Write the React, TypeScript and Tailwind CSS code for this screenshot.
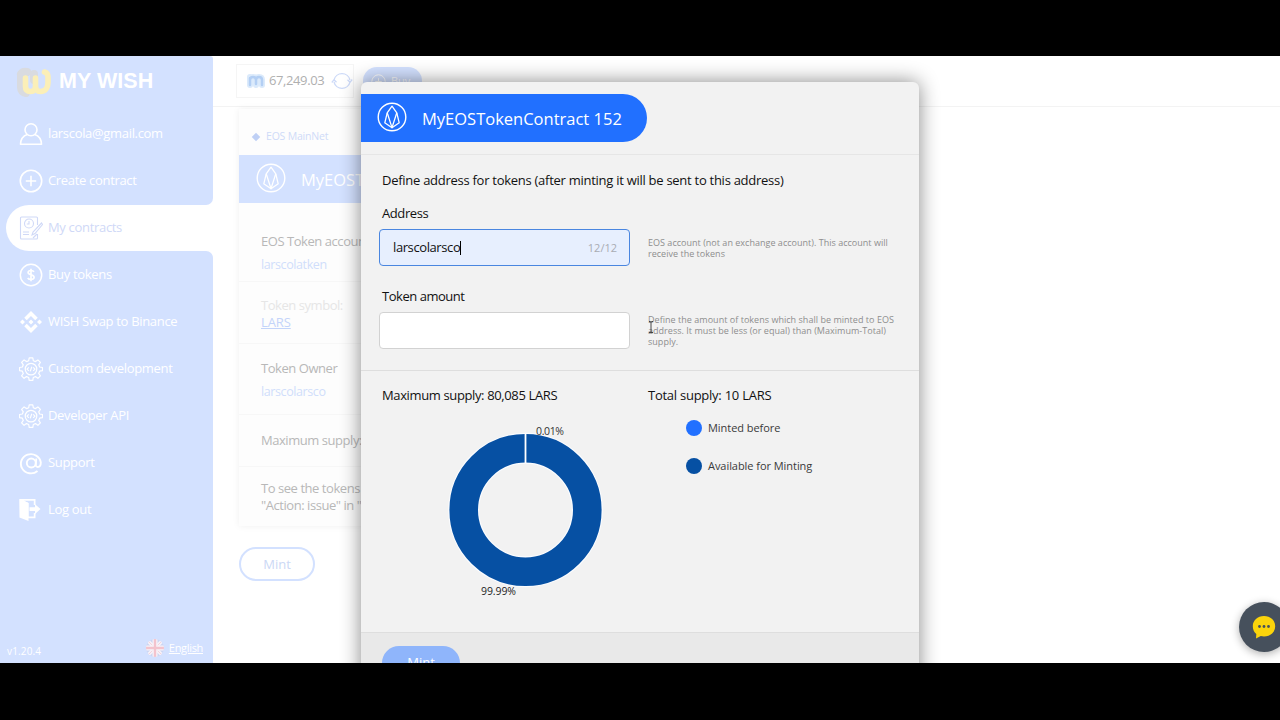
import type { ReactNode } from 'react';
import { SiBinance } from 'react-icons/si';

function EosIcon({ className }: { className?: string }) {
  return (
    <svg viewBox="0 0 30 30" className={className} fill="none" stroke="currentColor" strokeLinejoin="round">
      <circle cx="15" cy="15" r="13.8" strokeWidth="1.4" />
      <path d="M15 4.2 10.2 10.8 7.8 20.800 15 25.800 22.200 20.800 19.800 10.8Z" strokeWidth="1.3" />
      <path d="M10.2 10.8 15 25.600 19.800 10.8" strokeWidth="1.3" />
    </svg>
  );
}

function UserIcon() {
  return (
    <svg viewBox="0 0 24 24" className="w-6 h-6" fill="none" stroke="currentColor" strokeWidth="1.600">
      <circle cx="12" cy="7.8" r="6" />
      <path d="M8.3 12.500C4 14 1.600 17.500 1.500 22.300h21c-.1-4.800-2.500-8.300-6.800-9.800" strokeLinejoin="round" />
    </svg>
  );
}

function PlusIcon({ className = 'w-6 h-6' }: { className?: string }) {
  return (
    <svg viewBox="0 0 24 24" className={className} fill="none" stroke="currentColor" strokeWidth="1.600">
      <circle cx="12" cy="12" r="10.7" />
      <path d="M12 6.800v10.400M6.800 12h10.400" />
    </svg>
  );
}

function ContractIcon() {
  return (
    <svg viewBox="0 0 24 24" className="w-6 h-6" fill="none" stroke="currentColor" strokeWidth="1.100">
      <path d="M18.500 9V2a1 1 0 0 0-1-1h-15a1 1 0 0 0-1 1v20a1 1 0 0 0 1 1h15a1 1 0 0 0 1-1v-4" />
      <circle cx="10" cy="7.500" r="4.500" />
      <path d="M10 5v3H7.800M4 16h6M4 18.500h6" />
      <path d="m22.500 7-8.500 9-1 3 3-1.500L23.500 8.500ZM14 22l4-4" />
    </svg>
  );
}

function DollarIcon() {
  return (
    <svg viewBox="0 0 24 24" className="w-6 h-6" fill="none" stroke="currentColor">
      <circle cx="12" cy="12" r="10.7" strokeWidth="1.500" />
      <path d="M15 8.800c-.6-.9-1.700-1.300-3-1.300-1.700 0-2.900.8-2.900 2.100 0 3 6 1.500 6 4.700 0 1.400-1.300 2.200-3.100 2.200-1.400 0-2.600-.5-3.300-1.500M12 5.800v12.400" strokeWidth="1.700" />
    </svg>
  );
}

function GearIcon() {
  return (
    <svg viewBox="0 0 24 24" className="w-6 h-6" fill="none" stroke="currentColor" strokeWidth="1.200" strokeLinejoin="round">
      <path d="M10.200 .8h3.600l.5 2.900 2.200.9 2.400-1.700 2.500 2.500-1.700 2.400.9 2.200 2.900.5v3.200l-2.900.5-.9 2.200 1.700 2.400-2.500 2.500-2.400-1.700-2.200.9-.5 2.900h-3.600l-.5-2.900-2.200-.9-2.400 1.700-2.500-2.500 1.700-2.400-.9-2.200-2.900-.5v-3.200l2.900-.5.900-2.200-1.700-2.400 2.500-2.500 2.400 1.700 2.200-.9Z" />
      <circle cx="12" cy="12.100" r="5.800" />
      <path d="m9.800 10.300-1.800 1.800 1.800 1.800M14.200 10.300l1.800 1.800-1.800 1.800M12.800 9.800l-1.600 4.600" />
    </svg>
  );
}

function AtIcon() {
  return (
    <svg viewBox="0 0 24 24" className="w-6 h-6" fill="none" stroke="currentColor" strokeWidth="1.900">
      <path d="M18.500 20A10 9.600 0 1 1 21.800 11.500c0 3-1.500 4.500-3 4.500-1.500 0-2.200-1-2-2.800L17.300 7.500" />
      <ellipse cx="12.300" cy="12" rx="4.500" ry="4.500" />
    </svg>
  );
}

function LogoutIcon() {
  return (
    <svg viewBox="0 0 24 24" className="w-6 h-6" fill="currentColor">
      <path d="M.5 1 9.500 5v18L.5 19.500Z" />
      <path d="M.5 1h16v6h-1.700V2.700H5L9.500 5v13.500h5.300V15h1.700v5.200H9V22L1 19Z" />
      <path d="M10.500 9.300h5.500V6.200l5.500 4.900-5.500 4.900V13h-5.500Z" />
    </svg>
  );
}

function Flag() {
  return (
    <svg viewBox="0 0 18 18" className="w-[18px] h-[18px]">
      <clipPath id="flag">
        <circle cx="9" cy="9" r="9" />
      </clipPath>
      <g clipPath="url(#flag)">
        <rect width="18" height="18" fill="#ccd5f2" />
        <path d="M0 0 18 18M18 0 0 18" stroke="#f6f2f8" strokeWidth="3.500" />
        <path d="M0 0 18 18M18 0 0 18" stroke="#f3d3dd" strokeWidth="1" />
        <path d="M9 0v18M0 9h18" stroke="#f7f3f9" strokeWidth="5" />
        <path d="M9 0v18M0 9h18" stroke="#f3c3cd" strokeWidth="2.400" />
      </g>
    </svg>
  );
}

function NavItem({ icon, label }: { icon: ReactNode; label: string }) {
  return (
    <a className="flex items-center gap-[5px] h-[47px] pl-[19px] text-white">
      {icon}
      {label}
    </a>
  );
}

function Sidebar() {
  return (
    <aside className="w-[213px] shrink-0 flex flex-col text-[13px] font-medium tracking-[-0.32px]">
      <div className="h-[149px] bg-[#d3e1ff] rounded-br-[7px] rounded-tr-[3px]">
        <div className="flex items-center gap-[7px] h-[54px] pl-4">
          <svg viewBox="0 0 36 30" className="w-9 h-[30px] -mt-[2px]" fill="none" strokeLinecap="round" strokeLinejoin="round">
            <path d="M5 8v12q0 5 5 6M5 7q2-3 6-2M18 7v6" stroke="#d9dbe0" strokeWidth="8" />
            <path d="M9.500 11v8.500q0 5 5 5t5-5V11v8.500q0 5 5 5c5 0 7.500-4 7.500-9V10q0-4-3.500-5" stroke="#fbefb8" strokeWidth="5.600" />
          </svg>
          <span className="font-['Liberation_Sans'] font-bold text-[21.500px] text-white tracking-[0.05px] -mt-[3px]">MY WISH</span>
        </div>
        <NavItem icon={<UserIcon />} label="larscola@gmail.com" />
        <NavItem icon={<PlusIcon />} label="Create contract" />
      </div>
      <div className="bg-[#d3e1ff] pl-[6px]">
        <div className="flex items-center gap-[5px] h-[46px] pl-[13px] bg-white rounded-l-full text-[#d0d9f7] font-normal">
          <ContractIcon />
          My contracts
        </div>
      </div>
      <div className="flex-1 flex flex-col bg-[#d3e1ff] rounded-tr-[7px]">
        <NavItem icon={<DollarIcon />} label="Buy tokens" />
        <NavItem icon={<SiBinance className="w-6 h-[22px]" />} label="WISH Swap to Binance" />
        <NavItem icon={<GearIcon />} label="Custom development" />
        <NavItem icon={<GearIcon />} label="Developer API" />
        <NavItem icon={<AtIcon />} label="Support" />
        <NavItem icon={<LogoutIcon />} label="Log out" />
        <div className="mt-auto flex items-end justify-between pl-[7px] pr-[10px] pb-[6px] text-white">
          <span className="text-[10px] leading-[14px] tracking-[0.15px] -mb-px">v1.20.4</span>
          <span className="flex items-center gap-[5px] text-[11px] leading-[18px] underline font-normal">
            <Flag />
            English
          </span>
        </div>
      </div>
    </aside>
  );
}

function ContractPage() {
  return (
    <main className="flex-1 flex flex-col">
      <header className="flex h-[51px] pl-[23px] pt-2 gap-[9px] border-b border-[#f3f3f3]">
        <div className="flex items-center w-[118px] h-[34px] pl-[9px] border border-[#f5f5f5] text-[13px] text-[#b0b0b0] tracking-[-0.4px]">
          <svg viewBox="0 0 20 16" className="w-5 h-4" fill="none" strokeLinecap="round">
            <path d="M4 4v8M4 7q0-3 3-3t3 3v5M10 7q0-3 3-3t3 3v5" stroke="#dbeafb" strokeWidth="6" />
            <path d="M4 5v7M4 7q0-3 3-3t3 3v4M10 7q0-3 3-3t3 3v5" stroke="#b3cff4" strokeWidth="2.500" />
          </svg>
          <span className="ml-[3px] w-[60px]">67,249.03</span>
          <svg viewBox="0 0 22 20" className="w-[22px] h-5 ml-[2px]" fill="none" stroke="#cddaf8" strokeWidth="1.300">
            <path d="M3 9a8.200 8.200 0 0 1 16 0M19 11a8.200 8.200 0 0 1-16 0M.8 11.500 3 8.700l2.500 2.600M16.500 8.700l2.500 2.600 2.200-2.800" />
          </svg>
        </div>
        <button className="flex items-center gap-[5px] w-[59px] h-7 mt-[3px] pl-2 rounded-full bg-[#d3e1ff] text-white text-[11px]">
          <PlusIcon className="w-[15px] h-[15px]" />
          Buy
        </button>
      </header>
      <section className="w-[520px] ml-[26px] mt-[2px] h-[417px] bg-[#fdfdfd] text-[13px] text-[#b8b8b8] tracking-[-0.45px] whitespace-nowrap shadow-[0_0_7px_#00000010]">
        <div className="flex items-center h-[46px] pl-[14px] pt-[10px] gap-[7px] text-[10.500px] tracking-[-0.2px] text-[#cfdbf8]">
          <span className="w-[6px] h-[6px] rotate-45 bg-[#bfd0f5]" />
          EOS MainNet
        </div>
        <div className="flex items-center h-12 pl-[17px] gap-[15px] bg-[#d3e1ff] text-white text-[16.500px] font-medium tracking-normal">
          <EosIcon className="w-[30px] h-[30px] -mt-[2px]" />
          <span className="mt-[2px]">MyEOSToken</span>
        </div>
        <div className="h-[79px] pl-[22px] pt-[27px] border-b border-[#f7f7f7] leading-[23px]">
          <p>EOS Token account</p>
          <p className="text-[#d0defb] text-[12.500px] tracking-[-0.4px]">larscolatken</p>
        </div>
        <div className="h-[62px] pl-[22px] pt-[15px] border-b border-[#f7f7f7] leading-[17px]">
          <p className="text-[#e6e6e6]">Token symbol:</p>
          <p className="text-[#c3d4fa] underline tracking-[-0.1px]">LARS</p>
        </div>
        <div className="h-[71px] pl-[22px] pt-[13px] border-b border-[#f7f7f7] leading-[23px]">
          <p>Token Owner</p>
          <p className="text-[#d0defb] text-[12.500px] tracking-[-0.4px]">larscolarsco</p>
        </div>
        <div className="h-[52px] pl-[22px] pt-[14px] border-b border-[#f7f7f7] leading-[23px]">Maximum supply:</div>
        <div className="pl-[22px] pt-[13px] leading-[17px]">
          <p>To see the tokens</p>
          <p>"Action: issue" in "</p>
        </div>
      </section>
      <button className="w-[76px] h-[34px] ml-[26px] mt-[21px] pt-[2px] rounded-full border-2 border-[#d3e1ff] text-[#cbd8f5] text-[13px]">Mint</button>
    </main>
  );
}

function SupplyChart() {
  return (
    <svg viewBox="0 0 200 190" className="w-[200px] h-[190px] font-['Open_Sans']">
      <circle cx="95.500" cy="95" r="61.800" fill="none" stroke="#fafcff" strokeWidth="31" />
      <circle cx="95.500" cy="95" r="61.800" fill="none" stroke="#0650a3" strokeWidth="28.600" />
      <path d="M95.500 18.500v29.500" stroke="#fff" strokeWidth="1.800" />
      <text x="106" y="20" fontSize="10.500" fill="#333" textLength="28">0.01%</text>
      <text x="51" y="180" fontSize="10.500" fill="#222" textLength="35">99.99%</text>
    </svg>
  );
}

function MintModal() {
  return (
    <div className="absolute left-[361px] top-[26px] w-[558px] h-[640px] flex flex-col bg-[#f2f2f2] rounded-t-[6px] text-[13px] text-[#111] shadow-[0_0_20px_#00000078]">
      <div className="h-[73px] pt-3 border-b border-[#e6e6e6]">
        <div className="flex items-center w-[286px] h-[48px] pl-4 gap-[15px] rounded-r-full bg-[#2170ff] text-white text-[16.500px] font-medium">
          <EosIcon className="w-[30px] h-[30px] -mt-[2px]" />
          <span className="whitespace-nowrap mt-[2px]">MyEOSTokenContract 152</span>
        </div>
      </div>
      <div className="h-[216px] pl-[18px] pt-[15px] border-b border-[#dedede]">
        <p className="pl-[3px] leading-5 whitespace-nowrap tracking-[-0.27px]">Define address for tokens (after minting it will be sent to this address)</p>
        <p className="pl-[3px] mt-[13px] leading-5 tracking-[-0.4px]">Address</p>
        <div className="flex items-center mt-[6px]">
          <div className="flex items-center justify-between w-[251px] h-[37px] pl-[13px] pr-[12px] border border-[#4a86e0] rounded-[4px] bg-[#e7effe]">
            <span className="flex items-center tracking-[-0.4px]">
              larscolarsco
              <i className="w-px h-[14px] bg-black" />
            </span>
            <span className="text-[11px] text-[#a9acb3] mt-[2px]">12/12</span>
          </div>
          <p className="ml-[18px] text-[9px] leading-[11px] text-[#8e8e8e] tracking-[0.02px] whitespace-nowrap">
            EOS account (not an exchange account). This account will
            <br />
            receive the tokens
          </p>
        </div>
        <p className="pl-[3px] mt-[20px] leading-5 tracking-[-0.47px]">Token amount</p>
        <div className="flex items-center mt-[6px]">
          <div className="w-[251px] h-[37px] border border-[#d2d2d2] rounded-[4px] bg-white" />
          <p className="relative ml-[18px] text-[9px] leading-[11px] text-[#8e8e8e] tracking-[0.03px] whitespace-nowrap">
            Define the amount of tokens which shall be minted to EOS
            <br />
            address. It must be less (or equal) than (Maximum-Total)
            <br />
            supply.
            <svg viewBox="0 0 6 12" className="absolute left-0 top-[7px] w-[6px] h-3" fill="none" stroke="#333">
              <path d="M1 .5h1.500L3 1l.5-.5H5M3 1v10M1 11.500h4" strokeWidth=".9" />
            </svg>
          </p>
        </div>
      </div>
      <div className="flex h-[261px] pt-[14px] pl-[21px]">
        <div className="w-[266px]">
          <p className="leading-5 tracking-[-0.37px]">Maximum supply: 80,085 LARS</p>
          <div className="ml-[48px] mt-[10px]">
            <SupplyChart />
          </div>
        </div>
        <div>
          <p className="leading-5 tracking-[-0.25px]">Total supply: 10 LARS</p>
          <ul className="ml-[38px] mt-[13px] flex flex-col gap-[18px] text-[11px] text-[#3a3a3a] tracking-[-0.05px]">
            <li className="flex items-center gap-[6px] h-5">
              <span className="w-4 h-4 rounded-full bg-[#2170ff]" />
              Minted before
            </li>
            <li className="flex items-center gap-[6px] h-5">
              <span className="w-4 h-4 rounded-full bg-[#0650a3]" />
              Available for Minting
            </li>
          </ul>
        </div>
      </div>
      <div className="flex-1 pt-[13px] pl-[21px] border-t border-[#dedede] bg-[#e9e9e9]">
        <button className="w-[78px] h-[34px] rounded-full bg-[#8fb5fb] text-white text-[13px] font-medium">Mint</button>
      </div>
    </div>
  );
}

export default function App() {
  return (
    <div className="w-[1280px] h-[720px] pt-14 bg-black overflow-hidden font-['Open_Sans',sans-serif]">
      <div className="relative flex h-[606.500px] bg-white overflow-hidden">
        <Sidebar />
        <ContractPage />
        <MintModal />
        <div className="absolute left-[1239px] top-[546px] w-[50px] h-[50px] flex items-center justify-center rounded-full bg-[#46505c] shadow-[0_2px_8px_#00000050]">
          <svg viewBox="0 0 24 24" className="w-6 h-6">
            <path d="M12 1C5.500 1 .8 5.500.8 11.200c0 3.300 1.300 6 3.500 7.900L4 23.500l4.800-2.400c1 .3 2.100.4 3.200.4 6.500 0 11.200-4.500 11.200-10.300S18.500 1 12 1Z" fill="#fbd40b" />
            <circle cx="7.500" cy="11.500" r="1.400" fill="#46505c" />
            <circle cx="12" cy="11.500" r="1.400" fill="#46505c" />
            <circle cx="16.500" cy="11.500" r="1.400" fill="#46505c" />
          </svg>
        </div>
      </div>
    </div>
  );
}
